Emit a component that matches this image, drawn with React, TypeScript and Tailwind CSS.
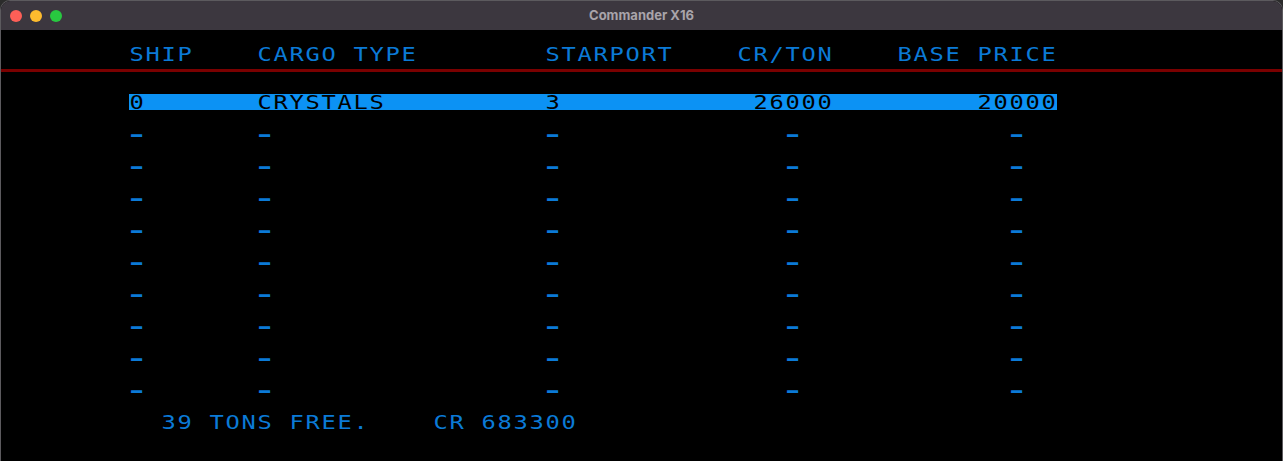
import React from "react";

const COLS = 80;
const ROWS = 27;

type Part = [number, string];

function makeLine(parts: Part[]): string[] {
  const arr = new Array(COLS).fill(" ");
  for (const [col, text] of parts) {
    for (let i = 0; i < text.length; i++) arr[col + i] = text[i];
  }
  return arr;
}

const lines: Record<number, string[]> = {
  1: makeLine([
    [8, "SHIP"],
    [16, "CARGO TYPE"],
    [34, "STARPORT"],
    [46, "CR/TON"],
    [56, "BASE PRICE"],
  ]),
  4: makeLine([
    [8, "0"],
    [16, "CRYSTALS"],
    [34, "3"],
    [47, "26000"],
    [61, "20000"],
  ]),
  24: makeLine([
    [10, "39 TONS FREE."],
    [27, "CR 683300"],
  ]),
};
for (let r = 6; r <= 22; r += 2) {
  lines[r] = makeLine([
    [8, "-"],
    [16, "-"],
    [34, "-"],
    [49, "-"],
    [63, "-"],
  ]);
}

function Cell({ ch, hl }: { ch: string; hl: boolean }) {
  const base = "inline-block h-4 w-4 shrink-0 text-center leading-4";
  const color = hl ? "bg-[#0c92f4] text-black" : "text-[#0b7ad6]";
  if (ch === "-") {
    return (
      <span className={`${base} ${color}`}>
        <span className="inline-block scale-x-[1.9] font-bold">-</span>
      </span>
    );
  }
  return (
    <span className={`${base} ${color}`}>
      <span className="inline-block scale-x-[1.25]">{ch === " " ? "\u00a0" : ch}</span>
    </span>
  );
}

function TextRow({ chars, row }: { chars: string[]; row: number }) {
  return (
    <div className="flex h-4 whitespace-pre">
      {chars.map((ch, i) => (
        <Cell key={i} ch={ch} hl={row === 4 && i >= 8 && i <= 65} />
      ))}
    </div>
  );
}

export default function App() {
  const rows = [];
  for (let r = 0; r < ROWS; r++) {
    if (r === 2) {
      rows.push(
        <div key={r} className="h-4 pt-[7px]">
          <div className="h-[3px] w-full bg-[#7a0000]" />
        </div>
      );
    } else if (lines[r]) {
      rows.push(<TextRow key={r} chars={lines[r]} row={r} />);
    } else {
      rows.push(<div key={r} className="h-4" />);
    }
  }

  return (
    <div className="h-[461px] w-[1283px] overflow-hidden bg-[#2b2b2b]">
      <div className="flex h-[470px] flex-col overflow-hidden rounded-t-[10px] border border-b-0 border-[#5c5a5e] bg-black">
        <div className="grid h-[29px] shrink-0 grid-cols-[1fr_auto_1fr] items-center bg-[#3c373f]">
          <div className="flex items-center gap-[8px] pl-[9px]">
            <span className="h-3 w-3 rounded-full bg-[#fe5f57]" />
            <span className="h-3 w-3 rounded-full bg-[#febc2e]" />
            <span className="h-3 w-3 rounded-full bg-[#28c840]" />
          </div>
          <div className="font-['Inter',sans-serif] text-[13px] font-bold text-[#a9a4aa]">
            Commander X16
          </div>
          <div />
        </div>
        <div className="font-['DejaVu_Sans_Mono',monospace] text-[19px]">{rows}</div>
      </div>
    </div>
  );
}
